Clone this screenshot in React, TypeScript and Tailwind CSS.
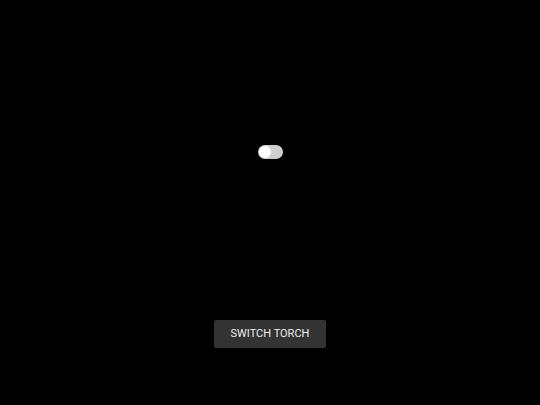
export default function App() {
  return (
    <div className="flex h-[405px] w-[540px] flex-col items-center bg-black font-['Liberation_Sans',Arial,sans-serif]">
      <div className="mt-[145px] flex h-[14px] w-[25px] items-center rounded-full bg-[#cfcfcf] px-[1px]">
        <div className="h-[12px] w-[12px] rounded-full bg-white" />
      </div>
      <button className="mt-[161px] flex h-[28px] w-[112px] items-center justify-center rounded-[2px] bg-[#333333] font-['Roboto',Arial,sans-serif] text-[11px] text-[#ececec]">
        SWITCH TORCH
      </button>
    </div>
  );
}
